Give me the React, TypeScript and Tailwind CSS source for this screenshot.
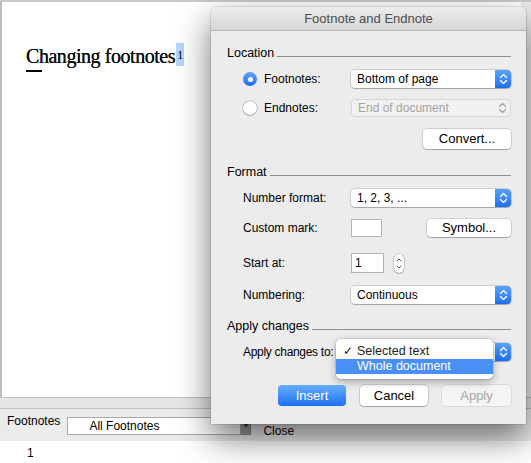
import React from 'react';

const Chevrons: React.FC<{ color: string }> = ({ color }) => (
  <svg width="9" height="12" viewBox="0 0 9 12" fill="none">
    <path d="M1.5 4.5 L4.5 1.5 L7.5 4.5" stroke={color} strokeWidth="1.3" strokeLinecap="round" strokeLinejoin="round" />
    <path d="M1.5 7.5 L4.5 10.5 L7.5 7.5" stroke={color} strokeWidth="1.3" strokeLinecap="round" strokeLinejoin="round" />
  </svg>
);

const Popup: React.FC<{ text: string; disabled?: boolean }> = ({ text, disabled }) => {
  if (disabled) {
    return (
      <div className="flex h-[18px] w-[160px] items-center rounded-[4px] border border-[#d6d6d6] bg-[#f1f1f1]">
        <span className="flex-1 pl-[6px] text-[#a3a3a3]">{text}</span>
        <div className="flex w-[16px] justify-center"><Chevrons color="#a0a0a0" /></div>
      </div>
    );
  }
  return (
    <div className="flex h-[18px] w-[160px] items-center overflow-hidden rounded-[4px] bg-white shadow-[0_0_0_0.5px_rgba(0,0,0,0.25),0_1px_1px_rgba(0,0,0,0.2)]">
      <span className="flex-1 pl-[6px]">{text}</span>
      <div className="flex h-full w-[16px] items-center justify-center bg-gradient-to-b from-[#5aa2fb] to-[#1d6cf3]">
        <Chevrons color="#ffffff" />
      </div>
    </div>
  );
};

const Radio: React.FC<{ checked?: boolean }> = ({ checked }) =>
  checked ? (
    <div className="flex h-[14px] w-[14px] items-center justify-center rounded-full bg-gradient-to-b from-[#5ea5fb] to-[#1b6df3]">
      <div className="h-[5px] w-[5px] rounded-full bg-white" />
    </div>
  ) : (
    <div className="h-[14px] w-[14px] rounded-full bg-white shadow-[0_0_0_0.5px_rgba(0,0,0,0.35),0_1px_1px_rgba(0,0,0,0.15)]" />
  );

const Button: React.FC<{ label: string; width: string; kind?: 'default' | 'primary' | 'disabled'; height?: string }> = ({ label, width, kind = 'default', height = 'h-[20px]' }) => {
  const look =
    kind === 'primary'
      ? 'bg-gradient-to-b from-[#68aefc] to-[#1a6ff5] text-white'
      : kind === 'disabled'
      ? 'bg-[#f4f4f4] text-[#a4a4a4] shadow-[0_0_0_0.5px_rgba(0,0,0,0.15)]'
      : 'bg-white text-black shadow-[0_0_0_0.5px_rgba(0,0,0,0.25),0_1px_1px_rgba(0,0,0,0.2)]';
  return (
    <div className={`flex ${height} ${width} items-center justify-center rounded-[4px] text-[13px] ${look}`}>{label}</div>
  );
};

const SectionHeader: React.FC<{ title: string; mt: string }> = ({ title, mt }) => (
  <div className={`flex h-[16px] items-center ${mt}`}>
    <span className="text-[12.5px]">{title}</span>
    <div className="ml-[3px] mt-[6px] h-px flex-1 bg-[#8f8f8f]" />
  </div>
);

const Row: React.FC<{ mt: string; h?: string; label: React.ReactNode; children?: React.ReactNode }> = ({ mt, h = 'h-[18px]', label, children }) => (
  <div className={`flex ${h} items-center pl-[16px] ${mt}`}>
    <div className="flex w-[108px] items-center">{label}</div>
    {children}
  </div>
);

export default function App() {
  return (
    <div className="relative h-[463px] w-[531px] overflow-hidden bg-white font-['Liberation_Sans',Arial,sans-serif]">
      {/* document window */}
      <div className="flex h-full flex-col">
        <div className="h-[2px] bg-[#c9c9c9]" />
        <div className="flex flex-1">
          <div className="relative flex-1 border-l-2 border-[#bdbdbd] bg-white">
            <div className="pl-[24px] pt-[42px]">
              <div className="flex items-start font-['Liberation_Serif',serif] text-[20px] leading-[24px] tracking-[-0.45px] text-[#111]">
                <span className="[text-shadow:0_0_0.4px_#000]">Changing footnotes</span>
                <span className="ml-[1px] -mt-[1px] bg-[#b5d5fd] px-[1px] text-[13px] leading-[23px]">1</span>
              </div>
              <div className="mt-[2px] h-[2px] w-[16px] bg-black" />
            </div>
          </div>
          <div className="w-[10px] bg-[#ececec]" />
        </div>
        <div className="h-[12px] border-y border-[#c2c2c2] bg-[#e6e6e6]" />
        <div className="flex h-[32px] items-start bg-[#ebebeb] pl-[7px] pt-[4px] text-[12px] text-black">
          <span className="leading-[16px]">Footnotes</span>
          <div className="ml-[7px] mt-[4px] flex h-[18px]">
            <div className="flex w-[174px] items-center border border-[#a9a9a9] bg-white pl-[21px]">All Footnotes</div>
            <div className="flex w-[10px] items-center justify-center border border-l-0 border-[#8b8b8b] bg-[#9c9c9c] text-[7px] text-[#333]">▼</div>
          </div>
          <span className="ml-[12px] mt-[9px]">Close</span>
        </div>
        <div className="h-[22px] bg-white pl-[27px] pt-[3px] text-[12px]">1</div>
      </div>

      {/* dialog */}
      <div className="absolute left-[211px] top-[7px] flex h-[417px] w-[315px] flex-col rounded-t-[5px] bg-[#ececec] text-[12px] text-black shadow-[0_14px_34px_rgba(0,0,0,0.55),0_0_0_0.5px_rgba(0,0,0,0.2)]">
        <div className="flex h-[24px] shrink-0 items-center justify-center rounded-t-[5px] border-b border-[#b7b7b7] bg-gradient-to-b from-[#ececec] to-[#d6d6d6] text-[13px] text-[#4d4d4d]">
          Footnote and Endnote
        </div>
        <div className="flex flex-col pl-[16px] pr-[15px]">
          <SectionHeader title="Location" mt="mt-[14px]" />
          <Row mt="mt-[9px]" label={<><Radio checked /><span className="ml-[7px]">Footnotes:</span></>}>
            <Popup text="Bottom of page" />
          </Row>
          <Row mt="mt-[11px]" label={<><Radio /><span className="ml-[7px]">Endnotes:</span></>}>
            <Popup text="End of document" disabled />
          </Row>
          <div className="mt-[12px] flex justify-end">
            <Button label="Convert..." width="w-[88px]" />
          </div>

          <SectionHeader title="Format" mt="mt-[15px]" />
          <Row mt="mt-[9px]" label="Number format:">
            <Popup text="1, 2, 3, ..." />
          </Row>
          <Row mt="mt-[12px]" label="Custom mark:">
            <div className="h-[18px] w-[31px] border border-[#b4b4b4] bg-white" />
            <div className="ml-auto">
              <Button label="Symbol..." width="w-[84px]" height="h-[18px]" />
            </div>
          </Row>
          <Row mt="mt-[16px]" h="h-[20px]" label="Start at:">
            <div className="flex h-[20px] w-[33px] items-center border border-[#b4b4b4] bg-white pl-[3px]">1</div>
            <div className="ml-[10px] flex h-[19px] w-[10px] items-center justify-center rounded-full bg-white shadow-[0_0_0_0.5px_rgba(0,0,0,0.3),0_1px_1px_rgba(0,0,0,0.15)]">
              <svg width="6" height="13" viewBox="0 0 6 13" fill="none">
                <path d="M1 4 L3 2 L5 4" stroke="#555" strokeWidth="1" strokeLinecap="round" />
                <path d="M1 9 L3 11 L5 9" stroke="#555" strokeWidth="1" strokeLinecap="round" />
              </svg>
            </div>
          </Row>
          <Row mt="mt-[13px]" label="Numbering:">
            <Popup text="Continuous" />
          </Row>

          <SectionHeader title="Apply changes" mt="mt-[14px]" />
          <Row mt="mt-[9px]" label={<span className="whitespace-nowrap tracking-[-0.3px]">Apply changes to:</span>}>
            <Popup text="" />
          </Row>

          <div className="mt-[24px] flex justify-end gap-[14px]">
            <Button label="Insert" width="w-[68px]" kind="primary" height="h-[21px]" />
            <Button label="Cancel" width="w-[68px]" height="h-[21px]" />
            <Button label="Apply" width="w-[69px]" kind="disabled" height="h-[21px]" />
          </div>
        </div>

        {/* open popup menu */}
        <div className="absolute left-[125px] top-[332px] w-[157px] rounded-[5px] bg-white/95 pb-[5px] pt-[4px] text-[12.5px] shadow-[0_0_0_0.5px_rgba(0,0,0,0.2),0_3px_8px_rgba(0,0,0,0.3)]">
          <div className="relative flex h-[16px] items-center pl-[21px] text-[#222]">
            <span className="absolute left-[7px] text-[12px]">✓</span>
            Selected text
          </div>
          <div className="flex h-[15px] items-center bg-[#4a8ff6] pl-[21px] text-white">Whole document</div>
        </div>
      </div>
    </div>
  );
}
